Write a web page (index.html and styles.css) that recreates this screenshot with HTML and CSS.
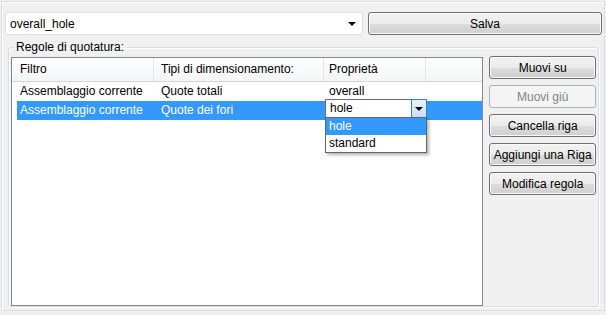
FILE: index.html
```html
<!DOCTYPE html>
<html lang="it">

<head>
    <meta charset="UTF-8">
    <meta name="viewport" content="width=device-width, initial-scale=1.0">
    <title>Regole di quotatura</title>
    <link rel="stylesheet" href="styles.css">
</head>

<body>
    <div class="window">
        <div class="top">
            <div class="combo">
                <span>overall_hole</span>
                <span class="arrow"></span>
            </div>
            <button class="btn save">Salva</button>
        </div>

        <fieldset class="group">
            <legend>Regole di quotatura:</legend>
            <div class="grid">
                <div class="head">
                    <div class="hcell c1">Filtro</div>
                    <div class="hcell c2">Tipi di dimensionamento:</div>
                    <div class="hcell c3">Proprietà</div>
                    <div class="hcell c4"></div>
                </div>
                <div class="row">
                    <div class="cell c1">Assemblaggio corrente</div>
                    <div class="cell c2">Quote totali</div>
                    <div class="cell c3">overall</div>
                </div>
                <div class="row sel">
                    <div class="cell c1">Assemblaggio corrente</div>
                    <div class="cell c2">Quote dei fori</div>
                    <div class="cell c3">
                        <div class="editor">
                            <span class="val">hole</span>
                            <span class="drop-btn"><span class="arrow"></span></span>
                        </div>
                        <!-- lista aperta dell'editor -->
                        <ul class="list">
                            <li class="on">hole</li>
                            <li>standard</li>
                        </ul>
                    </div>
                </div>
            </div>

            <div class="buttons">
                <button class="btn">Muovi su</button>
                <button class="btn" disabled>Muovi giù</button>
                <button class="btn">Cancella riga</button>
                <button class="btn">Aggiungi una Riga</button>
                <button class="btn">Modifica regola</button>
            </div>
        </fieldset>
    </div>
</body>

</html>
```

FILE: styles.css
```css
* {
    margin: 0;
    padding: 0;
    box-sizing: border-box;
    list-style: none;
}

body {
    background: #f0f0f0;
    font: 12px "Liberation Sans", Arial, sans-serif;
    color: #000;
}

.window {
    margin: 1px;
    width: 604px;
    height: 310px;
    border: 1px solid #d6e0e8;
    box-shadow: inset 1px 1px 0 #fff;
    padding: 10px 2px 3px 3px;
    display: flex;
    flex-direction: column;
}

.top {
    display: flex;
    gap: 5px;
    height: 23px;
}

.combo {
    width: 358px;
    background: #fff;
    border: 1px solid #e0e0e0;
    border-radius: 2px;
    display: flex;
    align-items: center;
    justify-content: space-between;
    padding: 0 6px 0 4px;
}

.arrow {
    width: 0;
    height: 0;
    border-left: 4px solid transparent;
    border-right: 4px solid transparent;
    border-top: 4px solid #000;
}

.btn {
    font: inherit;
    color: #000;
    height: 23px;
    border: 1px solid #707070;
    border-radius: 3px;
    background: linear-gradient(#f2f2f2 0%, #ebebeb 50%, #dddddd 51%, #cfcfcf 100%);
    box-shadow: inset 0 0 0 1px #fafafa;
}

.btn:disabled {
    border-color: #adb2b5;
    background: #f4f4f4;
    box-shadow: none;
    color: #838383;
}

.save {
    flex: 1;
}

.group {
    flex: 1;
    min-width: 0;
    margin: 5px 3px 0 3px;
    border: 1px solid #d5dfe5;
    border-radius: 3px;
    box-shadow: inset 1px 1px 0 #fff, 1px 1px 0 #fff;
    padding: 3px 2px 0 2px;
    display: flex;
    gap: 6px;
}

.group legend {
    margin-left: 3px;
    padding: 0 2px;
    line-height: 14px;
}

.grid {
    width: 474px;
    background: #fff;
    border: 1px solid #828790;
}

.head {
    display: grid;
    grid-template-columns: 142px 170px 102px 1fr;
    height: 24px;
    border-bottom: 1px solid #d5d5d5;
    background: linear-gradient(#ffffff, #f3f4f6);
}

.hcell {
    line-height: 23px;
    border-right: 1px solid #e3e4e6;
    white-space: nowrap;
}

.hcell.c4 {
    border-right: none;
}

.row {
    display: grid;
    grid-template-columns: 137px 170px 102px 1fr;
    margin-left: 5px;
    height: 19px;
    line-height: 19px;
    white-space: nowrap;
}

.head .c1 { padding-left: 8px; }
.head .c2 { padding-left: 7px; }
.head .c3 { padding-left: 5px; }

.row .c1 { padding-left: 3px; }
.row .c2 { padding-left: 7px; }
.row .c3 { padding-left: 5px; position: relative; }

.row.sel {
    background: #3399ff;
    color: #fff;
}

.editor {
    position: absolute;
    left: 1px;
    top: -2px;
    width: 102px;
    height: 19px;
    background: #fff;
    color: #000;
    border: 1px solid #6e6e6e;
    display: flex;
    align-items: stretch;
}

.editor .val {
    flex: 1;
    padding-left: 4px;
    line-height: 17px;
}

.drop-btn {
    width: 16px;
    margin: -1px -1px -1px 0;
    border: 1px solid #3c7fb1;
    background: linear-gradient(#eaf3fc, #c6e0f6);
    display: flex;
    align-items: center;
    justify-content: center;
}

.drop-btn .arrow {
    border-left-width: 4px;
    border-right-width: 4px;
}

.list {
    position: absolute;
    left: 1px;
    top: 16px;
    width: 102px;
    background: #fff;
    color: #000;
    border: 1px solid #646464;
    box-shadow: 2px 2px 3px rgba(0, 0, 0, 0.3);
}

.list li {
    height: 17px;
    line-height: 17px;
    padding-left: 3px;
}

.list li.on {
    background: #3399ff;
    color: #fff;
}

.buttons {
    width: 107px;
    margin-top: -1px;
    display: flex;
    flex-direction: column;
    gap: 6px;
}
```
